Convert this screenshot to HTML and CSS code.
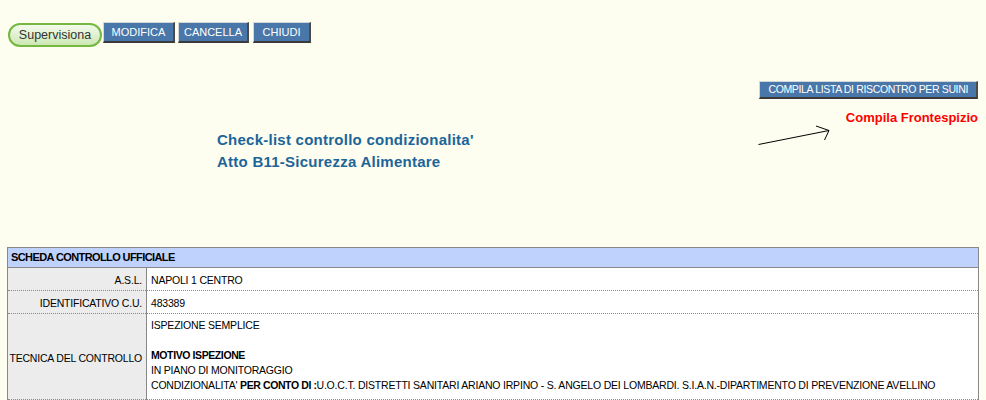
FILE: index.html
```html
<!DOCTYPE html>
<html lang="it">
<head>
<meta charset="utf-8">
<title>Check-list condizionalita'</title>
<link rel="stylesheet" href="styles.css">
</head>
<body>
<div class="page">
  <div class="toolbar">
    <button class="btn-pill">Supervisiona</button>
    <button class="btn btn-mod">MODIFICA</button>
    <button class="btn btn-canc">CANCELLA</button>
    <button class="btn btn-chiudi">CHIUDI</button>
  </div>
  <div class="actions">
    <button class="btn btn-wide">COMPILA LISTA DI RISCONTRO PER SUINI</button>
  </div>
  <div class="intro">
    <h1 class="title">Check-list controllo condizionalita'<br>Atto B11-Sicurezza Alimentare</h1>
    <div class="front">
      <svg class="arrow" width="76" height="24" viewBox="0 0 76 24">
        <path d="M2.5 21.5 L73 7.5 M60 3 L73 7.5 L68.5 17" fill="none" stroke="#000" stroke-width="1"/>
      </svg>
      <a class="front-link">Compila Frontespizio</a>
    </div>
  </div>
  <table class="scheda">
    <tr><th colspan="2" class="scheda-head">SCHEDA CONTROLLO UFFICIALE</th></tr>
    <tr><td class="lbl">A.S.L.</td><td class="val">NAPOLI 1 CENTRO</td></tr>
    <tr><td class="lbl">IDENTIFICATIVO C.U.</td><td class="val">483389</td></tr>
    <tr><td class="lbl">TECNICA DEL CONTROLLO</td><td class="val val-multi">ISPEZIONE SEMPLICE<br><br><b>MOTIVO ISPEZIONE</b><br>IN PIANO DI MONITORAGGIO<br>CONDIZIONALITA' <b>PER CONTO DI :</b>U.O.C.T. DISTRETTI SANITARI ARIANO IRPINO - S. ANGELO DEI LOMBARDI. S.I.A.N.-DIPARTIMENTO DI PREVENZIONE AVELLINO</td></tr>
    <tr><td class="lbl">&nbsp;</td><td class="val">&nbsp;</td></tr>
  </table>
</div>
</body>
</html>
```

FILE: styles.css
```css
html, body {
  margin: 0;
  padding: 0;
  background: #fdfdf0;
  font-family: "Liberation Sans", Arial, sans-serif;
  font-size: 11px;
  color: #000;
}

.page {
  padding: 22px 7px 0 7px;
}

.toolbar {
  display: flex;
  align-items: flex-start;
  padding-left: 1px;
}

.btn-pill {
  width: 94px;
  height: 24px;
  margin-top: 1px;
  padding: 0;
  border: 2px solid #74b83f;
  border-radius: 12px;
  background: linear-gradient(#f3faec, #cde7b4);
  color: #333;
  font-family: "Liberation Sans", Arial, sans-serif;
  font-size: 12.5px;
  line-height: 20px;
  margin-right: 1px;
}

.btn {
  height: 21px;
  padding: 0 8px;
  border-style: solid;
  border-width: 1px 2px 2px 1px;
  border-color: #d6d6d6 #4a4a4a #3a3a3a #d6d6d6;
  background: #4a77a9;
  color: #fff;
  font-family: "Liberation Sans", Arial, sans-serif;
  font-size: 11px;
  line-height: 18px;
  text-align: center;
}

.btn-mod { width: 72px; padding: 0; }
.btn-canc { width: 71px; padding: 0; margin-left: 3px; }
.btn-chiudi { width: 58px; padding: 0; margin-left: 4px; }

.actions {
  display: flex;
  justify-content: flex-end;
  margin-top: 34px;
  margin-right: 1px;
}

.btn-wide {
  height: 18px;
  line-height: 15px;
  padding: 0 8px;
  font-size: 10.5px;
  letter-spacing: -0.35px;
}

.intro {
  display: flex;
  justify-content: space-between;
  align-items: flex-start;
  margin-top: 11px;
}

.title {
  margin: 19px 0 0 210px;
  font-size: 15px;
  line-height: 22px;
  font-weight: bold;
  letter-spacing: 0.25px;
  color: #1c6599;
}

.front {
  display: flex;
  align-items: flex-start;
  margin-right: 1px;
}

.arrow {
  display: block;
  margin-top: 13px;
  margin-right: 14px;
}

.front-link {
  color: #ff0000;
  font-size: 13px;
  font-weight: bold;
  line-height: 16px;
}

.scheda {
  margin-top: 74px;
  width: 972px;
  border-collapse: collapse;
  border: 1px solid #888;
  background: #fff;
}

.scheda-head {
  background: #bfd1fd;
  text-align: left;
  font-weight: bold;
  font-size: 11px;
  letter-spacing: -0.6px;
  height: 19px;
  line-height: 19px;
  padding: 0 3px;
  border-bottom: 1px solid #888;
}

.scheda td {
  font-size: 10.5px;
  letter-spacing: -0.2px;
  line-height: 14px;
  padding: 5px 4px 3px 4px;
  border-bottom: 1px dotted #8a8a8a;
  vertical-align: middle;
}

.scheda .lbl {
  width: 133px;
  padding-left: 1px;
  background: #ececec;
  text-align: right;
  border-right: 1px solid #888;
  white-space: nowrap;
}

.scheda .val {
  background: #fff;
}

.scheda .val-multi {
  line-height: 15px;
  padding-top: 4px;
  padding-bottom: 6px;
}

.val-multi b {
  letter-spacing: -0.4px;
}
```
